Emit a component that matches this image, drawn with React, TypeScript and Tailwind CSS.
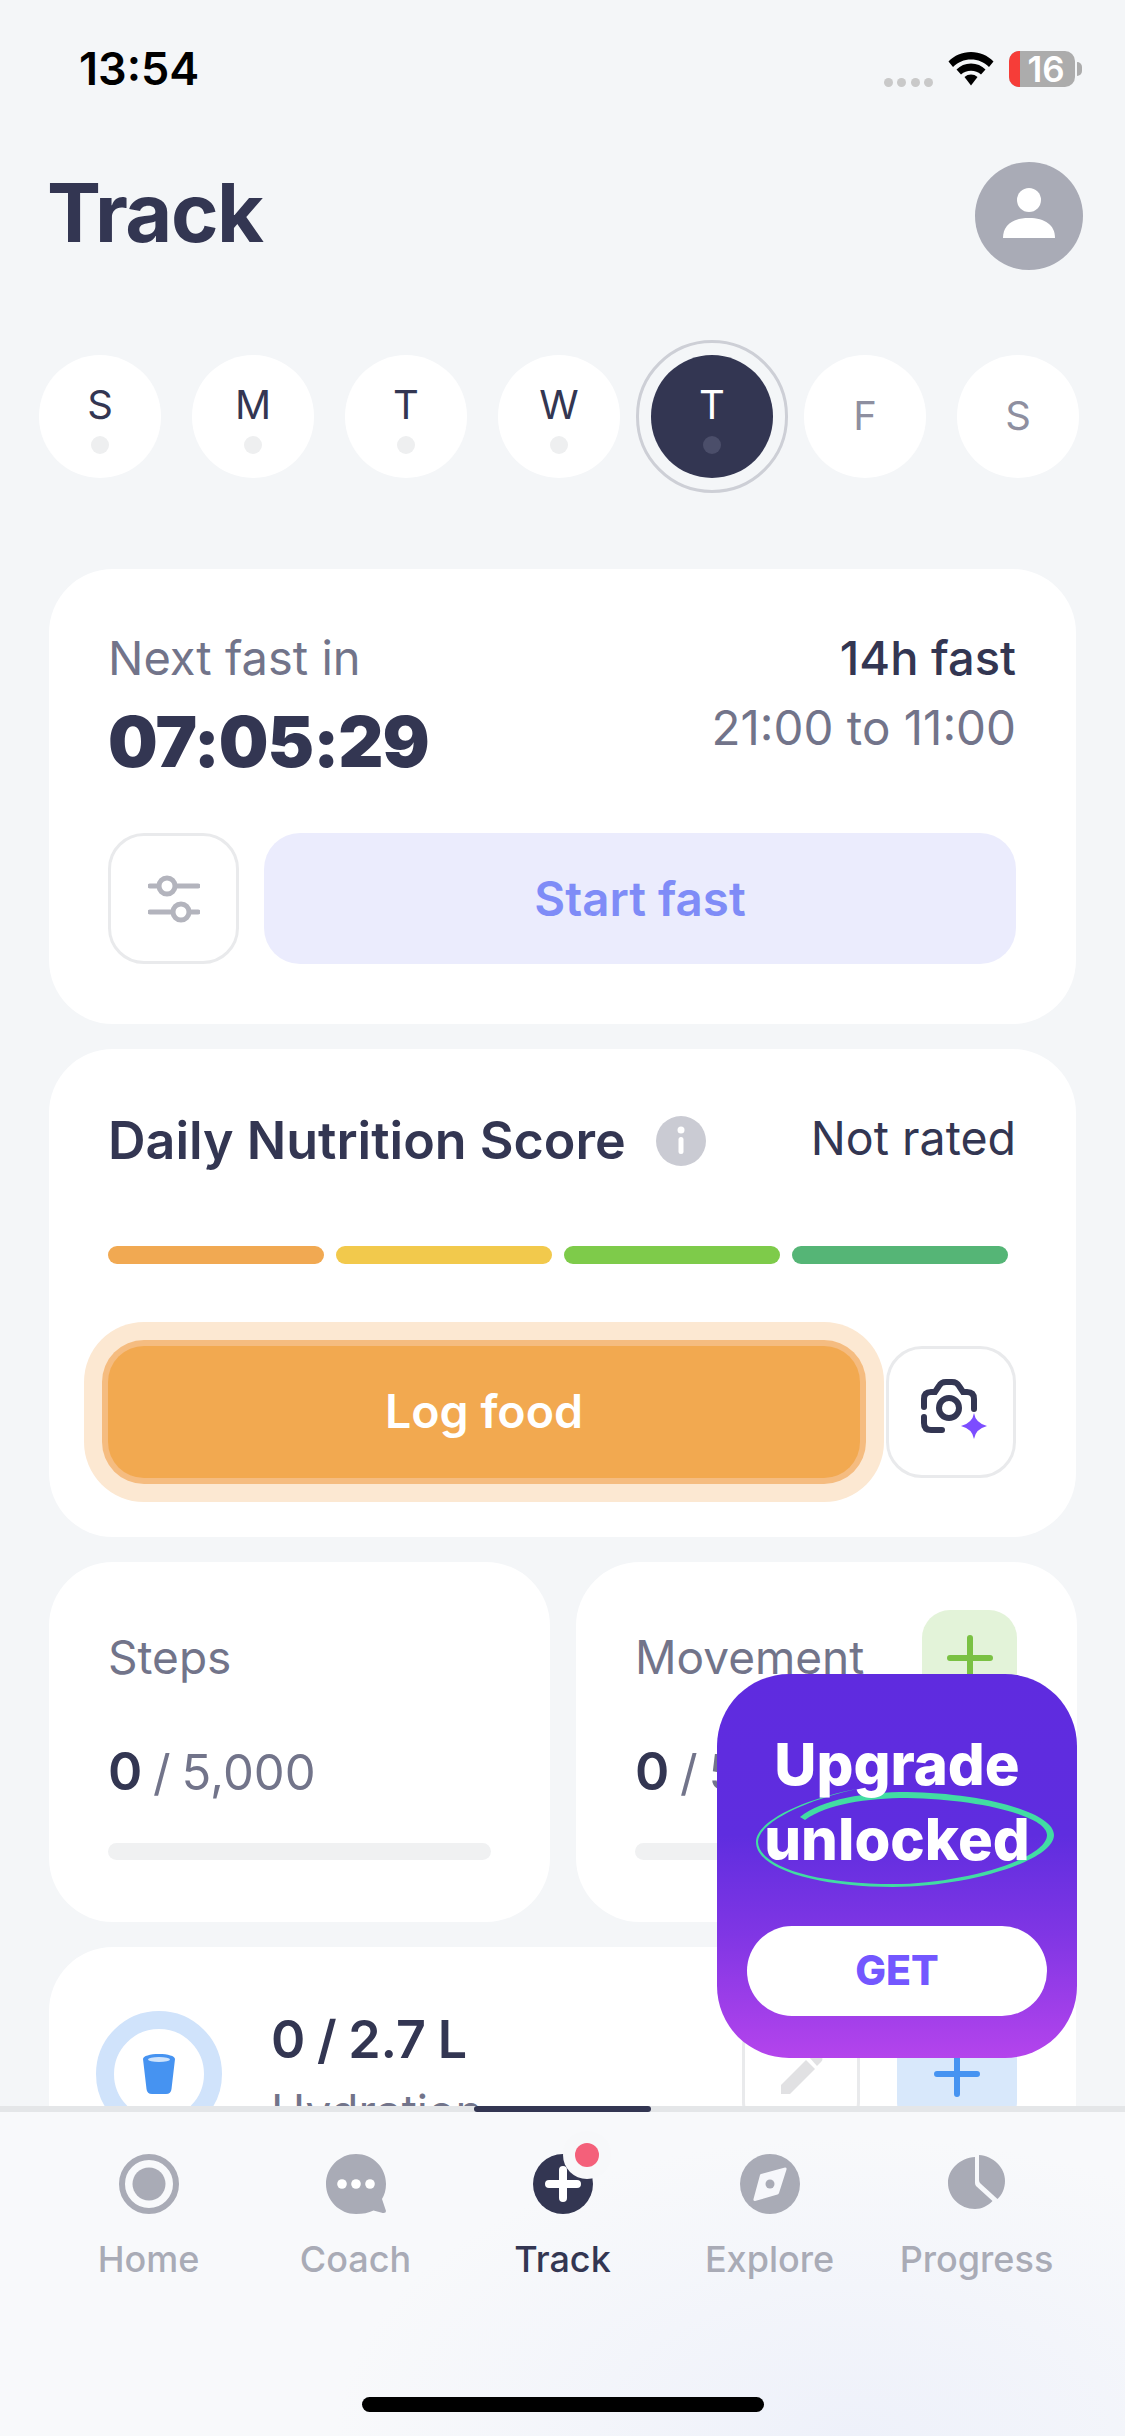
const days = [
  { label: "S", done: true },
  { label: "M", done: true },
  { label: "T", done: true },
  { label: "W", done: true },
  { label: "T", done: true, active: true },
  { label: "F" },
  { label: "S" },
];

function Plus({ color }: { color: string }) {
  return (
    <svg width="46" height="46" viewBox="0 0 46 46" fill="none" stroke={color} strokeWidth="6" strokeLinecap="round">
      <path d="M3 23h40M23 3v40" />
    </svg>
  );
}

function StatusBar() {
  return (
    <div className="flex h-[162px] shrink-0 items-start justify-between pt-[42px] pl-[79px] pr-[43px]">
      <span className="text-[45px] leading-[54px] font-semibold text-black">13:54</span>
      <div className="flex items-start pt-[9px]">
        <div className="mt-[27px] flex gap-[4.5px]">
          <span className="h-[9px] w-[9px] rounded-full bg-[#c9c9c9]" />
          <span className="h-[9px] w-[9px] rounded-full bg-[#c9c9c9]" />
          <span className="h-[9px] w-[9px] rounded-full bg-[#c9c9c9]" />
          <span className="h-[9px] w-[9px] rounded-full bg-[#c9c9c9]" />
        </div>
        <svg className="mt-[1px] ml-[15px]" width="46" height="34" viewBox="0 0 46 34" fill="black">
          <path d="M23 0C14 0 6.500 3.500 0.500 9.500L5 15C10 10 16 7.500 23 7.500S36 10 41 15L45.500 9.500C39.500 3.500 32 0 23 0Z" />
          <path d="M23 11.500C17 11.500 12.500 13.500 8.500 17.500L13 22.500C16 20 19 18.800 23 18.800S30 20 33 22.500L37.500 17.500C33.500 13.500 29 11.500 23 11.500Z" />
          <path d="M23 22.500C20.500 22.500 18.500 23.300 16.500 25L23 33.500L29.500 25C27.500 23.300 25.500 22.500 23 22.500Z" />
        </svg>
        <div className="relative ml-[15px] flex h-[36px] w-[66px] items-center justify-center rounded-[10px] bg-[#acacac] pl-[8px]">
          <span className="absolute inset-y-0 left-0 w-[11px] rounded-l-[10px] bg-[#f63d38]" />
          <span className="text-[35px] leading-[36px] font-semibold text-white">16</span>
        </div>
        <span className="mt-[11px] ml-[2px] h-[14px] w-[5px] rounded-r-full bg-[#acacac]" />
      </div>
    </div>
  );
}

function DayPicker() {
  return (
    <div className="mt-[85px] flex shrink-0 gap-[31px] px-[39px]">
      {days.map((day, i) => (
        <div
          key={i}
          className={
            day.active
              ? "relative flex h-[123px] w-[122px] flex-col items-center rounded-full bg-[#333652] pt-[30px]"
              : "relative flex h-[123px] w-[122px] flex-col items-center rounded-full bg-white pt-[30px]"
          }
        >
          {day.active && <span className="absolute -inset-[15px] rounded-full border-[3px] border-[#cdcfd6]" />}
          <span
            className={
              day.done
                ? day.active
                  ? "text-[40px] leading-[40px] text-white"
                  : "text-[40px] leading-[40px] text-[#333652]"
                : "mt-[11px] text-[40px] leading-[40px] text-[#8e8fa0]"
            }
          >
            {day.label}
          </span>
          {day.done && (
            <span
              className={
                day.active
                  ? "mt-[11px] h-[18px] w-[18px] rounded-full bg-[#4b4e6a]"
                  : "mt-[11px] h-[18px] w-[18px] rounded-full bg-[#eeeff0]"
              }
            />
          )}
        </div>
      ))}
    </div>
  );
}

function FastCard() {
  return (
    <div className="mx-[49px] mt-[91px] rounded-[64px] bg-white pt-[63px] pr-[60px] pb-[60px] pl-[59px]">
      <div className="flex justify-between">
        <div>
          <p className="text-[47px] leading-[52px] text-[#72748a]">Next fast in</p>
          <p className="mt-[18px] text-[70px] leading-[80px] font-black tracking-[-1px] text-[#333652]">07:05:29</p>
        </div>
        <div className="text-right">
          <p className="text-[47px] leading-[52px] font-medium text-[#333652]">14h fast</p>
          <p className="mt-[18px] text-[47.500px] leading-[52px] text-[#72748a]">21:00 to 11:00</p>
        </div>
      </div>
      <div className="mt-[51px] flex gap-[25px]">
        <button className="flex h-[131px] w-[131px] items-center justify-center rounded-[36px] border-[3px] border-[#e9eaec] bg-white">
          <svg width="52" height="48" viewBox="0 0 52 48" fill="none" stroke="#b3b4bd" strokeWidth="5" strokeLinecap="round">
            <path d="M2 11h8M28 11h22M2 37h22M42 37h8" />
            <circle cx="19" cy="11" r="8" />
            <circle cx="33" cy="37" r="8" />
          </svg>
        </button>
        <button className="flex h-[131px] flex-1 items-center justify-center rounded-[36px] bg-[#ebecfd] text-[47.500px] font-semibold text-[#7f8cf7]">
          Start fast
        </button>
      </div>
    </div>
  );
}

function ScoreCard() {
  return (
    <div className="mx-[49px] mt-[25px] rounded-[64px] bg-white pt-[62px] pr-[60px] pb-[59px] pl-[59px]">
      <div className="flex items-center justify-between">
        <div className="flex items-center gap-[30px]">
          <h2 className="text-[52px] leading-[60px] font-semibold text-[#333652]">Daily Nutrition Score</h2>
          <svg width="50" height="50" viewBox="0 0 50 50">
            <circle cx="25" cy="25" r="25" fill="#cacbd3" />
            <circle cx="25" cy="14" r="3.500" fill="white" />
            <rect x="22.500" y="21" width="5" height="17" rx="2.500" fill="white" />
          </svg>
        </div>
        <span className="-mt-[6px] text-[46.500px] leading-[60px] text-[#333652]">Not rated</span>
      </div>
      <div className="mt-[75px] flex gap-[12px]">
        <span className="h-[18px] w-[216px] rounded-full bg-[#f1a952]" />
        <span className="h-[18px] w-[216px] rounded-full bg-[#f2c94c]" />
        <span className="h-[18px] w-[216px] rounded-full bg-[#7ecb4a]" />
        <span className="h-[18px] w-[216px] rounded-full bg-[#55b576]" />
      </div>
      <div className="mt-[82px] flex gap-[26px]">
        <button className="flex h-[132px] flex-1 items-center justify-center rounded-[36px] bg-[#f2a950] text-[46.500px] font-semibold text-white shadow-[0_0_0_6px_#f5bc80,0_0_0_24px_#fce8d2]">
          Log food
        </button>
        <button className="flex h-[132px] w-[130px] items-center justify-center rounded-[36px] border-[3px] border-[#e9eaec] bg-white">
          <svg className="ml-[4px]" width="70" height="70" viewBox="0 0 70 70" fill="none">
            <path
              d="M6 30V22Q6 15 13 15H17L21 9Q23 5 28 5H34Q39 5 41 9L45 15H49Q56 15 56 22V32M6 40V46Q6 53 13 53H24"
              stroke="#333652"
              strokeWidth="6"
              strokeLinecap="round"
            />
            <circle cx="31" cy="31" r="10" stroke="#333652" strokeWidth="6" />
            <path d="M56 36Q57.500 46 69 49Q57.500 52 56 62Q54.500 52 43 49Q54.500 46 56 36Z" fill="#7c4dff" />
          </svg>
        </button>
      </div>
    </div>
  );
}

function GoalCard({ title, goal, action }: { title: string; goal: string; action?: boolean }) {
  return (
    <div className="relative flex-1 rounded-[64px] bg-white pt-[69px] pr-[59px] pb-[62px] pl-[59px]">
      <p className="text-[46px] leading-[52px] text-[#72748a]">{title}</p>
      <p className="mt-[59px] text-[49px] leading-[60px] text-[#72748a] [word-spacing:-3px]">
        <span className="text-[52px] font-semibold text-[#333652]">0</span> / {goal}
      </p>
      <div className="mt-[40px] h-[17px] w-[383px] rounded-full bg-[#f0f1f2]" />
      {action && (
        <div className="absolute top-[48px] right-[60px] flex h-[96px] w-[95px] items-start justify-center rounded-[28px] bg-[#e3f3d9] pt-[25px]">
          <Plus color="#7ac143" />
        </div>
      )}
    </div>
  );
}

function HydrationCard() {
  return (
    <div className="mx-[49px] mt-[25px] flex h-[300px] shrink-0 items-start rounded-[64px] bg-white pt-[64px] pr-[59px] pl-[47px]">
      <div className="flex h-[126px] w-[126px] shrink-0 items-center justify-center rounded-full border-[18px] border-[#d0e3fb]">
        <svg width="32" height="40" viewBox="0 0 32 40">
          <path d="M0 5C0 2 7 0 16 0S32 2 32 5L28.500 35Q28 40 23 40H9Q4 40 3.500 35Z" fill="#4693f1" />
          <ellipse cx="16" cy="5.500" rx="11" ry="2.500" fill="#cfe3fb" />
        </svg>
      </div>
      <div className="-mt-[1px] ml-[49px]">
        <p className="text-[52px] leading-[60px] font-semibold text-[#333652] [word-spacing:-1.500px]">0 / 2.7 L</p>
        <p className="mt-[15px] text-[46px] leading-[52px] text-[#72748a]">Hydration</p>
      </div>
      <div className="ml-auto flex gap-[37px]">
        <button className="flex h-[126px] w-[118px] items-center justify-center rounded-[36px] border-[3px] border-[#e9eaec] bg-white">
          <svg width="50" height="50" viewBox="0 0 50 50" fill="#e1e1e3">
            <path d="M5 45V36L30 11L39 20L14 45Z" />
            <path d="M33 8L37 4Q40 2 43 5L45 7Q48 10 45 13L41 17Z" />
          </svg>
        </button>
        <button className="flex h-[126px] w-[120px] items-center justify-center rounded-[36px] bg-[#d8e8fb]">
          <Plus color="#4693f1" />
        </button>
      </div>
    </div>
  );
}

function UpgradePromo() {
  return (
    <div className="absolute top-[1674px] left-[717px] flex h-[384px] w-[360px] flex-col items-center overflow-hidden rounded-[72px] bg-[linear-gradient(180deg,#5f2bdf_0%,#5f2ddf_42%,#8036e4_68%,#b444ec_100%)] pt-[53px]">
      <svg className="absolute inset-0" width="360" height="384" viewBox="0 0 360 384" fill="#42dca3">
        <path d="M83 143C105 125 150 118 190 118C265 119 337 138 337 161C337 187 250 213 176 213C100 213 39 195 39 168C39 145 95 123 140 115C97 124 42 146 41 168C42 193 100 210 176 210C245 210 330 185 330 161C330 142 262 125 190 124C150 124 110 130 88 146Z" />
      </svg>
      <p className="relative text-center text-[58px] leading-[75px] font-extrabold text-white">
        Upgrade
        <br />
        unlocked
      </p>
      <button className="relative mt-[49px] flex h-[90px] w-[300px] items-center justify-center rounded-full bg-white text-[41px] font-extrabold text-[#7357ff]">
        GET
      </button>
    </div>
  );
}

const tabs = [
  {
    label: "Home",
    icon: (
      <svg width="60" height="60" viewBox="0 0 60 60">
        <circle cx="30" cy="30" r="27" fill="none" stroke="#a9abb6" strokeWidth="6" />
        <circle cx="30" cy="30" r="16.500" fill="#a9abb6" />
      </svg>
    ),
  },
  {
    label: "Coach",
    icon: (
      <svg width="60" height="60" viewBox="0 0 60 60">
        <path d="M30 0C46.500 0 60 13 60 30C60 36 58.500 41 56 45L60 57Q60 60 55 58.500L47.500 56.500C42.500 59 37 60 30 60C13.500 60 0 46.500 0 30S13.500 0 30 0Z" fill="#a9abb6" />
        <circle cx="16" cy="30" r="4.800" fill="white" />
        <circle cx="30" cy="30" r="4.800" fill="white" />
        <circle cx="44" cy="30" r="4.800" fill="white" />
      </svg>
    ),
  },
  {
    label: "Track",
    active: true,
    icon: (
      <div className="relative h-[60px] w-[60px]">
        <svg width="60" height="60" viewBox="0 0 60 60">
          <circle cx="30" cy="30" r="30" fill="#333652" />
          <path d="M30 16V44M16 30H44" stroke="white" strokeWidth="8" strokeLinecap="round" />
        </svg>
        <span className="absolute -top-[23px] -right-[18px] flex h-[48px] w-[48px] items-center justify-center rounded-full bg-[#f7f8fa]">
          <span className="h-[24px] w-[24px] rounded-full bg-[#f4607a]" />
        </span>
      </div>
    ),
  },
  {
    label: "Explore",
    icon: (
      <svg width="60" height="60" viewBox="0 0 60 60">
        <circle cx="30" cy="30" r="30" fill="#a9abb6" />
        <path d="M21 20L45 13.500Q47 13.500 46.500 15.500L39 39Q38.500 40 37.500 40.500L15 47Q13 47 13.500 45L20 21Q20 20.500 21 20Z" fill="#f6f7fb" />
        <circle cx="30" cy="30" r="4.500" fill="#a9abb6" />
      </svg>
    ),
  },
  {
    label: "Progress",
    icon: (
      <svg width="60" height="60" viewBox="0 0 60 60">
        <path d="M28 3V29Q28 30.500 29 32L45.500 47C41 51.500 35 55 28 55C13 55 1 43 1 29S13 4 28 3Z" fill="#a9abb6" />
        <path d="M32 1C46 2 58 13 58 27C58 34 55 41 50.500 45L33.500 29.500Q32 28 32 26Z" fill="#a9abb6" />
      </svg>
    ),
  },
];

function TabBar() {
  return (
    <nav className="relative h-[330px] shrink-0 border-t-[6px] border-[#e4e6e8] bg-[radial-gradient(ellipse_520px_300px_at_76%_100%,#eef1fa_0%,#f8f9fb_100%)]">
      <span className="absolute -top-[6px] left-[474px] h-[6px] w-[177px] rounded-full bg-[#333652]" />
      <div className="grid grid-cols-5 px-[45px] pt-[42px]">
        {tabs.map((tab) => (
          <div key={tab.label} className="flex flex-col items-center">
            <div className="h-[60px] w-[60px]">{tab.icon}</div>
            <span
              className={
                tab.active
                  ? "mt-[25px] text-[36px] leading-[40px] font-medium text-[#333652]"
                  : "mt-[25px] text-[36px] leading-[40px] font-medium text-[#a9abb6]"
              }
            >
              {tab.label}
            </span>
          </div>
        ))}
      </div>
      <div className="mx-auto mt-[118px] h-[15px] w-[402px] rounded-full bg-black" />
    </nav>
  );
}

export default function App() {
  return (
    <div className="relative flex h-[2436px] w-[1125px] flex-col overflow-hidden bg-[#f4f6f8] font-['Inter',sans-serif]">
      <main className="min-h-0 flex-1 overflow-hidden">
        <StatusBar />
        <header className="flex h-[108px] items-center justify-between pr-[42px] pl-[47px]">
          <h1 className="-mt-[6px] text-[81px] leading-none font-bold tracking-[-1.500px] text-[#333652]">Track</h1>
          <div className="flex h-[108px] w-[108px] items-center justify-center rounded-full bg-[#a9abb6]">
            <svg className="-mt-[6px]" width="52" height="52" viewBox="0 0 52 52" fill="white">
              <circle cx="26" cy="13" r="12" />
              <path d="M0 51C0 38 10 31 26 31S52 38 52 51Z" />
            </svg>
          </div>
        </header>
        <DayPicker />
        <FastCard />
        <ScoreCard />
        <div className="mx-[49px] mt-[25px] flex gap-[26px]">
          <GoalCard title="Steps" goal="5,000" />
          <GoalCard title="Movement" goal="500" action />
        </div>
        <HydrationCard />
      </main>
      <TabBar />
      <UpgradePromo />
    </div>
  );
}
